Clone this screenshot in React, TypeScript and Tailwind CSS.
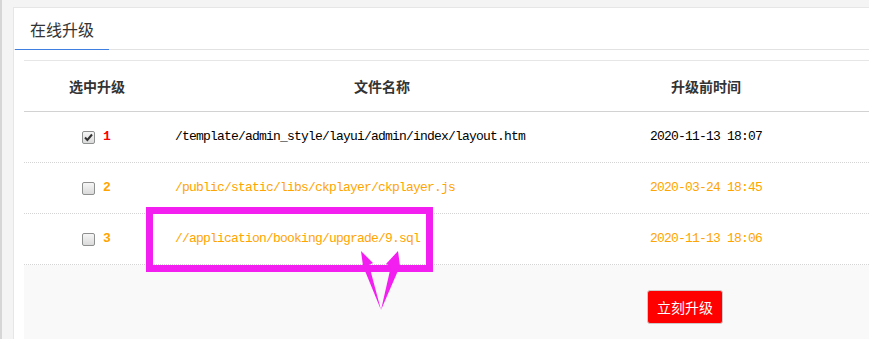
import React from "react";

const cjk = { fontFamily: '"Noto Sans CJK SC", "Liberation Sans", sans-serif' };
const mono = { fontFamily: '"Liberation Mono", "Noto Sans CJK SC", monospace' };

type Row = { id: number; checked: boolean; path: string; time: string; hot?: boolean };

const rows: Row[] = [
  { id: 1, checked: true, path: "/template/admin_style/layui/admin/index/layout.htm", time: "2020-11-13 18:07", hot: true },
  { id: 2, checked: false, path: "/public/static/libs/ckplayer/ckplayer.js", time: "2020-03-24 18:45" },
  { id: 3, checked: false, path: "//application/booking/upgrade/9.sql", time: "2020-11-13 18:06" },
];

function Checkbox({ checked }: { checked: boolean }) {
  return (
    <span className="flex h-[13px] w-[13px] items-center justify-center rounded-[2px] border border-[#8e8f8f] bg-gradient-to-b from-[#f6f6f6] to-[#dadada]">
      {checked && (
        <svg width="9" height="9" viewBox="0 0 9 9">
          <path d="M1 4.5 L3.4 7 L8 1.5" fill="none" stroke="#333" strokeWidth="2" />
        </svg>
      )}
    </span>
  );
}

export default function App() {
  return (
    <div className="relative h-[339px] w-[869px] overflow-hidden border-l-2 border-[#d6d6d6] bg-[#f4f4f4] pl-[11px] pt-[7px]">
      <div className="w-[900px] border border-r-0 border-[#e6e6e6] bg-white" style={cjk}>
        <div className="flex h-[42px] border-b border-[#e2e2e2]">
          <div className="relative ml-[1px] flex w-[94px] items-center justify-center text-[16px] text-[#333]">
            在线升级
            <span className="absolute -bottom-px left-0 h-px w-full bg-[#3f7fe2]" />
          </div>
        </div>

        <div className="px-[10px] pt-[10px]">
          <div className="flex h-[52px] border-y border-t-[#e6e6e6] border-b-[#d2d2d2] text-[14px] font-bold text-[#333]">
            <div className="flex w-[146px] items-center justify-center">选中升级</div>
            <div className="flex w-[424px] items-center justify-center">文件名称</div>
            <div className="flex w-[224px] items-center justify-center">升级前时间</div>
            <div className="flex-1" />
          </div>

          {rows.map((r) => {
            const color = r.hot ? "text-black" : "text-[#ffa500]";
            return (
              <div key={r.id} className="flex h-[51px] border-b border-dotted border-[#d4d4d4] text-[13px] tracking-[-0.8px]" style={mono}>
                <div className="flex w-[146px] items-center justify-center gap-[8px] pr-[2px]">
                  <Checkbox checked={r.checked} />
                  <span className={`font-bold ${r.hot ? "text-[#ff0000]" : "text-[#ffa500]"}`}>{r.id}</span>
                </div>
                <div className={`flex w-[424px] items-center pl-[5px] ${color}`}>{r.path}</div>
                <div className={`flex w-[224px] items-center justify-center ${color}`}>{r.time}</div>
                <div className="flex-1" />
              </div>
            );
          })}

          <div className="h-[80px] bg-[#f9f9f9] pl-[623px] pt-[25px]">
            <button className="h-[34px] w-[76px] rounded-[3px] border border-[#d0c8c8] bg-[#ff0000] text-[14px] text-white" style={cjk}>
              立刻升级
            </button>
          </div>
        </div>
      </div>

      <svg className="pointer-events-none absolute left-[-2px] top-0" width="869" height="339">
        <rect x="149.5" y="210.5" width="280" height="58" fill="none" stroke="#f21ff0" strokeWidth="7" />
        <polygon points="361,251 373,263 369,265 381,310 363,266" fill="#f21ff0" />
        <polygon points="398,251 400,266 381,310 391,266 386,264" fill="#f21ff0" />
      </svg>
    </div>
  );
}
